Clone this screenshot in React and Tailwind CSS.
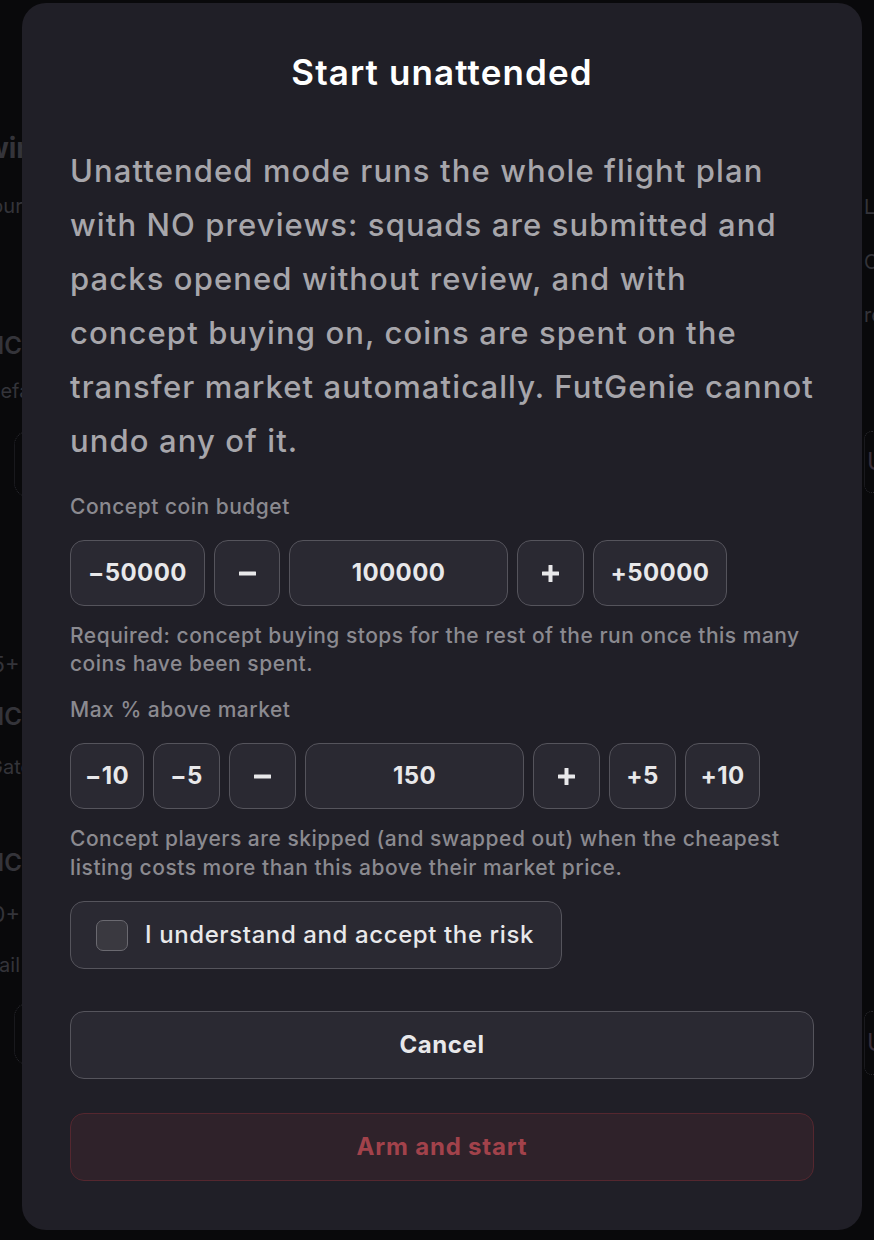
import React from "react";

const font = { fontFamily: "Inter, 'Noto Sans', sans-serif" };

function Minus() {
  return (
    <svg width="17" height="17" viewBox="0 0 17 17">
      <rect x="0" y="6.5" width="17" height="4" rx="0.5" fill="#e8e8ea" />
    </svg>
  );
}
function Plus() {
  return (
    <svg width="17" height="17" viewBox="0 0 17 17">
      <rect x="0" y="6.5" width="17" height="4" rx="0.5" fill="#e8e8ea" />
      <rect x="6.5" y="0" width="4" height="17" rx="0.5" fill="#e8e8ea" />
    </svg>
  );
}

function StepBtn({ children, w }) {
  return (
    <div
      className={`${w} h-[66px] shrink-0 flex items-center justify-center rounded-[14px] border-[1.5px] border-[#55545c] bg-[#2a2932] text-[24px] font-bold text-[#e8e8ea] tracking-[0.4px]`}
    >
      {children}
    </div>
  );
}

function Background() {
  return (
    <div className="flex justify-between h-[1240px] text-[#34343a]">
      <div className="-ml-[34px] w-[60px] flex flex-col whitespace-nowrap">
        <div className="mt-[130px] text-[28px] font-bold leading-[36px] pl-[2px]">Twin</div>
        <div className="mt-[26px] text-[20px] leading-[28px] pl-[14px]">Tour</div>
        <div className="mt-[110px] text-[24px] font-semibold leading-[32px] pl-[16px]">PICK</div>
        <div className="mt-[15px] text-[20px] leading-[28px] pl-[20px]">Default</div>
        <div className="mt-[26px] ml-[48px] w-[60px] h-[66px] rounded-[14px] border border-dotted border-[#2a2a30]"></div>
        <div className="mt-[152px] text-[22px] leading-[30px] pl-[12px]">85+</div>
        <div className="mt-[22px] text-[24px] font-semibold leading-[32px] pl-[16px]">PICK</div>
        <div className="mt-[20px] text-[20px] leading-[28px] pl-[22px]">Gate</div>
        <div className="mt-[66px] text-[24px] font-semibold leading-[32px] pl-[16px]">PICK</div>
        <div className="mt-[20px] text-[22px] leading-[30px] pl-[12px]">80+</div>
        <div className="mt-[22px] text-[20px] leading-[28px] pl-[26px]">fail</div>
        <div className="mt-[24px] ml-[48px] w-[60px] h-[62px] rounded-[14px] border border-dotted border-[#2a2a30]"></div>
      </div>
      <div className="w-[30px] -mr-[20px] flex flex-col whitespace-nowrap">
        <div className="mt-[193px] text-[20px] leading-[28px]">Log</div>
        <div className="mt-[27px] text-[20px] leading-[28px]">OP</div>
        <div className="mt-[25px] text-[20px] leading-[28px]">re</div>
        <div className="mt-[102px] h-[62px] w-[40px] rounded-l-[8px] border border-dotted border-[#2a2a30] flex items-center pl-[2px] text-[24px] text-[#3a2f3a]">U</div>
        <div className="mt-[518px] h-[64px] w-[40px] rounded-l-[8px] border border-dotted border-[#2a2a30] flex items-center pl-[2px] text-[24px] text-[#3a2f3a]">U</div>
      </div>
    </div>
  );
}

export default function App() {
  return (
    <div className="relative w-[874px] h-[1240px] overflow-hidden bg-[#09090b]" style={font}>
      <Background />
      <div className="absolute inset-0 pt-[3px] pl-[22px]">
        <div className="w-[840px] h-[1227px] rounded-[24px] bg-[#201f27] px-[48px] pt-[47px] flex flex-col">
          <h1 className="text-center text-[35px] leading-[44px] font-semibold text-white tracking-[1.1px]">
            Start unattended
          </h1>
          <p className="mt-[50px] text-[31px] leading-[54px] font-medium text-[#a7a6ab] tracking-[1.1px]">
            Unattended mode runs the whole flight plan with NO previews: squads are submitted and packs opened without review, and with concept buying on, coins are spent on the transfer market automatically. FutGenie cannot undo any of it.
          </p>

          <div className="mt-[25px] text-[21px] leading-[28px] font-medium text-[#8b8a90] tracking-[0.5px]">Concept coin budget</div>
          <div className="mt-[19px] flex gap-[9px]">
            <StepBtn w="w-[135px]">−50000</StepBtn>
            <StepBtn w="w-[66px]"><Minus /></StepBtn>
            <StepBtn w="w-[219px]">100000</StepBtn>
            <StepBtn w="w-[67px]"><Plus /></StepBtn>
            <StepBtn w="w-[134px]">+50000</StepBtn>
          </div>
          <p className="mt-[16px] text-[21px] leading-[28px] font-medium text-[#8b8a90] tracking-[0.5px]">
            Required: concept buying stops for the rest of the run once this many coins have been spent.
          </p>

          <div className="mt-[18px] text-[21px] leading-[28px] font-medium text-[#8b8a90] tracking-[0.5px]">Max % above market</div>
          <div className="mt-[19px] flex gap-[9px]">
            <StepBtn w="w-[74px]">−10</StepBtn>
            <StepBtn w="w-[67px]">−5</StepBtn>
            <StepBtn w="w-[67px]"><Minus /></StepBtn>
            <StepBtn w="w-[219px]">150</StepBtn>
            <StepBtn w="w-[67px]"><Plus /></StepBtn>
            <StepBtn w="w-[67px]">+5</StepBtn>
            <StepBtn w="w-[75px]">+10</StepBtn>
          </div>
          <p className="mt-[16px] text-[21px] leading-[28.5px] font-medium text-[#8b8a90] tracking-[0.5px]">
            Concept players are skipped (and swapped out) when the cheapest listing costs more than this above their market price.
          </p>

          <div className="mt-[19px] self-start w-[492px] h-[68px] rounded-[14px] border-[1.5px] border-[#55545c] bg-[#2a2932] flex items-center pl-[25px] gap-[17px]">
            <div className="w-[32px] h-[31px] rounded-[7px] border-[1.5px] border-[#6a6970] bg-[#3a3940]"></div>
            <span className="text-[24px] font-medium text-[#e8e8ea] tracking-[0.6px]">I understand and accept the risk</span>
          </div>

          <div className="mt-[42px] h-[68px] rounded-[14px] border-[1.5px] border-[#55545c] bg-[#2a2932] flex items-center justify-center text-[24px] font-bold text-[#e8e8ea] tracking-[0.6px]">
            Cancel
          </div>
          <div className="mt-[34px] h-[68px] rounded-[14px] border-[1.5px] border-[#55272f] bg-[#2f222a] flex items-center justify-center text-[24px] font-bold text-[#a2424b] tracking-[0.8px]">
            Arm and start
          </div>
        </div>
      </div>
    </div>
  );
}
